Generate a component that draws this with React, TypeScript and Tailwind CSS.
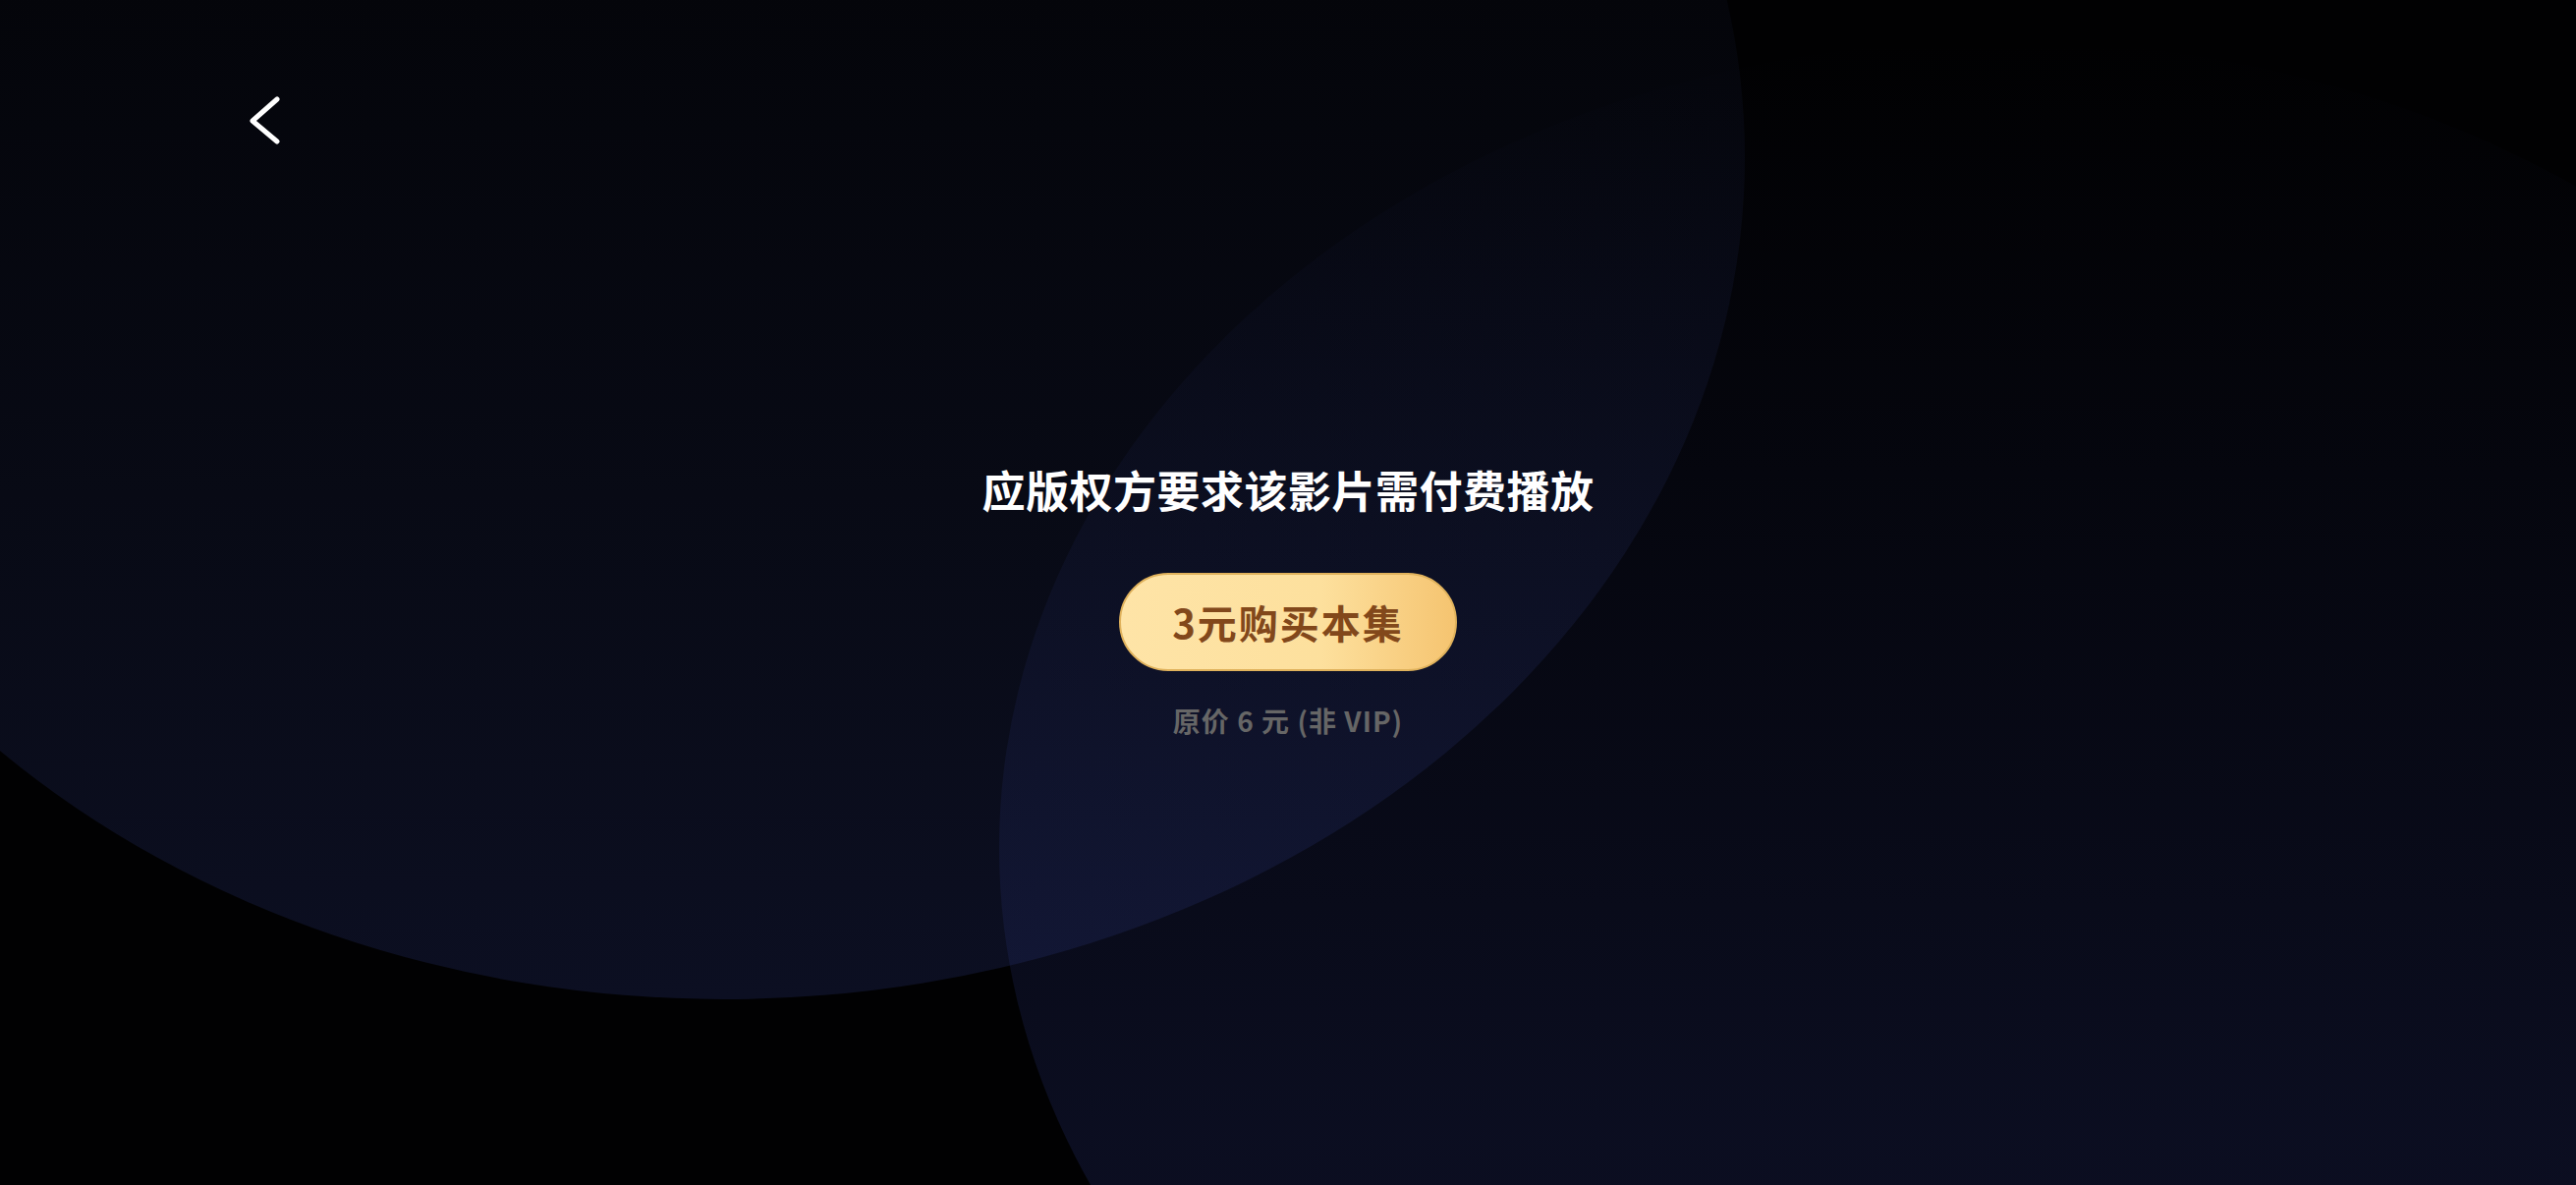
import React from "react";

export default function App() {
  return (
    <div
      className="relative w-full h-[1206px] overflow-hidden bg-[#010102]"
      style={{ fontFamily: '"Noto Sans CJK SC", "Noto Sans", sans-serif' }}
    >
      {/* decorative background ellipses */}
      <div className="absolute left-[-302px] top-[-697px] w-[2078px] h-[1714px] rounded-[50%] bg-linear-to-b from-[#04050a] from-40% via-[#080a15] via-70% to-[#0c0f22] to-100%" />
      <div className="absolute left-[1017px] top-[41px] w-[2040px] h-[1644px] rounded-[50%] bg-linear-to-b from-[#28327800] from-0% to-[#28327842] to-[68%]" />

      <div className="relative z-10 flex flex-col">
        <div className="pt-[96px] pl-[252px]">
          <button className="block w-[36px] h-[52px]" aria-label="返回">
            <svg width="36" height="52" viewBox="0 0 36 52" fill="none">
              <polyline
                points="30,5 5,27 30,48"
                stroke="#ffffff"
                strokeWidth="5"
                strokeLinecap="round"
                strokeLinejoin="round"
              />
            </svg>
          </button>
        </div>

        <div className="mt-[328px] flex flex-col items-center">
          <h1 className="text-[44px] leading-[44px] font-bold text-white tracking-[0.5px]">
            应版权方要求该影片需付费播放
          </h1>
          <button className="mt-[63px] w-[344px] h-[100px] rounded-full border-2 border-[#e0b25c] bg-linear-to-r from-[#fee4a7] via-[#fde09d] via-60% to-[#f5c470] flex items-center justify-center">
            <span className="text-[40px] leading-[40px] font-bold text-[#82481b] tracking-[2px]">
              3元购买本集
            </span>
          </button>
          <p className="mt-[36px] text-[28px] leading-[28px] font-bold text-[#666666] tracking-[1px]">
            原价 6 元 (非 VIP)
          </p>
        </div>
      </div>
    </div>
  );
}
